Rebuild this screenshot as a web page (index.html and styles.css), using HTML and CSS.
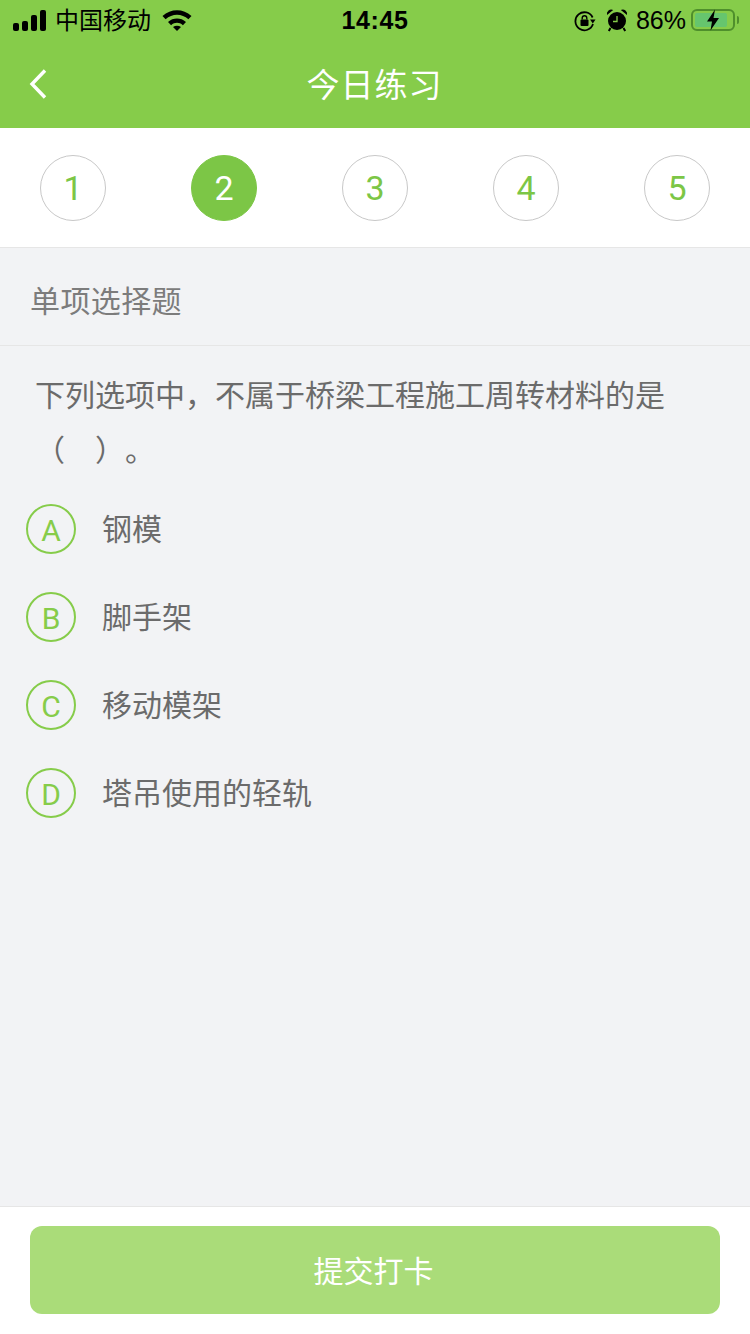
FILE: index.html
```html
<!DOCTYPE html>
<html lang="zh-CN">
<head>
    <meta charset="UTF-8">
    <meta name="viewport" content="width=device-width, initial-scale=1.0">
    <title>今日练习</title>
    <link rel="stylesheet" href="styles.css">
</head>
<body>
    <div class="app">
        <header class="top">
            <div class="status-bar">
                <div class="status-left">
                    <div class="signal">
                        <span class="bar bar-1"></span>
                        <span class="bar bar-2"></span>
                        <span class="bar bar-3"></span>
                        <span class="bar bar-4"></span>
                    </div>
                    <span class="carrier">中国移动</span>
                    <svg class="wifi" width="30" height="22" viewBox="0 0 30 22">
                        <path d="M0.5 7C8.8 -0.8 21.2 -0.8 29.5 7L26.4 10.3C19.8 4.3 10.2 4.3 3.6 10.3Z" fill="#000"/>
                        <path d="M6 13C11.2 8.4 18.8 8.4 24 13L20.9 16.2C17.2 13 12.8 13 9.1 16.2Z" fill="#000"/>
                        <path d="M11 18C13.4 16.2 16.6 16.2 19 18L15 22Z" fill="#000"/>
                    </svg>
                </div>
                <div class="status-time">14:45</div>
                <div class="status-right">
                    <svg class="rotate-lock" width="22" height="22" viewBox="0 0 22 22">
                        <path d="M18.6 7.5A9 9 0 1 0 19 14" fill="none" stroke="#000" stroke-width="1.8"/>
                        <path d="M16 9.5H21.5L18.8 13.5Z" fill="#000"/>
                        <rect x="6.5" y="9.5" width="8" height="6.5" rx="1" fill="#000"/>
                        <path d="M8.2 9.5V8A2.3 2.3 0 0 1 12.8 8V9.5" fill="none" stroke="#000" stroke-width="1.4"/>
                    </svg>
                    <svg class="alarm" width="22" height="24" viewBox="0 0 22 24">
                        <circle cx="11" cy="13" r="9" fill="#000"/>
                        <path d="M1 7A4.4 4.4 0 0 1 7.2 2Z" fill="#000"/>
                        <path d="M21 7A4.4 4.4 0 0 0 14.8 2Z" fill="#000"/>
                        <path d="M4.5 20L2.8 23M17.5 20L19.2 23" stroke="#000" stroke-width="2"/>
                        <path d="M11 8V13.5H7" fill="none" stroke="#86cc4a" stroke-width="1.3"/>
                    </svg>
                    <span class="battery-text">86%</span>
                    <div class="battery">
                        <div class="battery-level"></div>
                        <svg class="bolt" width="14" height="22" viewBox="0 0 14 22">
                            <path d="M9 0.5L1 12.5H6L4.5 21.5L13 9H7.5Z" fill="#000"/>
                        </svg>
                    </div>
                    <span class="battery-cap"></span>
                </div>
            </div>
            <div class="nav">
                <svg class="back" width="20" height="32" viewBox="0 0 20 32">
                    <path d="M17 2.5L4 16L17 29.5" fill="none" stroke="#fff" stroke-width="3.4"/>
                </svg>
                <h1 class="nav-title">今日练习</h1>
            </div>
        </header>

        <div class="steps">
            <div class="step">1</div>
            <div class="step active">2</div>
            <div class="step">3</div>
            <div class="step">4</div>
            <div class="step">5</div>
        </div>

        <main class="content">
            <div class="type-row">单项选择题</div>
            <div class="question">下列选项中，不属于桥梁工程施工周转材料的是（&nbsp;&nbsp;&nbsp;）。</div>
            <div class="options">
                <div class="option"><span class="letter">A</span><span class="option-text">钢模</span></div>
                <div class="option"><span class="letter">B</span><span class="option-text">脚手架</span></div>
                <div class="option"><span class="letter">C</span><span class="option-text">移动模架</span></div>
                <div class="option"><span class="letter">D</span><span class="option-text">塔吊使用的轻轨</span></div>
            </div>
        </main>

        <footer class="bottom">
            <button class="submit">提交打卡</button>
        </footer>
    </div>
</body>
</html>
```

FILE: styles.css
```css
:root {
    --green: #86cc4a;
    --green-dark: #7cc646;
    --green-light: #aadc79;
    --background: #f2f3f5;
    --border: #e6e6e6;
    --text: #6b6b6b;
}

* {
    margin: 0;
    padding: 0;
    box-sizing: border-box;
    font-family: 'Liberation Sans', 'Noto Sans CJK SC', sans-serif;
}

body {
    background-color: var(--background);
}

.app {
    display: flex;
    flex-direction: column;
    height: 1334px;
}

/* Header */
.top {
    height: 128px;
    background-color: var(--green);
}

.status-bar {
    position: relative;
    display: flex;
    justify-content: space-between;
    align-items: center;
    height: 40px;
    padding: 0 11px 0 13px;
    color: #000;
}

.status-left,
.status-right {
    display: flex;
    align-items: center;
}

.signal {
    display: flex;
    align-items: flex-end;
    gap: 3px;
    margin-right: 9px;
}

.bar {
    width: 6px;
    background-color: #000;
    border-radius: 2px;
}

.bar-1 { height: 8px; }
.bar-2 { height: 10px; }
.bar-3 { height: 16px; }
.bar-4 { height: 21px; }

.carrier {
    font-size: 24px;
    line-height: 40px;
    padding-top: 2px;
    margin-right: 11px;
}

.status-time {
    position: absolute;
    left: 0;
    right: 0;
    text-align: center;
    font-size: 25px;
    font-weight: bold;
    letter-spacing: 0.6px;
    line-height: 40px;
    pointer-events: none;
}

.rotate-lock {
    margin: 2px 10px 0 0;
}

.alarm {
    margin-right: 8px;
}

.battery-text {
    font-size: 25px;
    line-height: 40px;
    margin-right: 5px;
}

.battery {
    position: relative;
    width: 44px;
    height: 22px;
    border: 2px solid #4f8f2c;
    border-radius: 6px;
    padding: 2px;
}

.battery-level {
    width: 32px;
    height: 14px;
    background-color: #66c56e;
    border-radius: 2px;
}

.bolt {
    position: absolute;
    left: 13px;
    top: -2px;
}

.battery-cap {
    width: 2px;
    height: 8px;
    margin-left: 2px;
    background-color: #4f8f2c;
    border-radius: 0 2px 2px 0;
}

.nav {
    position: relative;
    height: 88px;
    display: flex;
    align-items: center;
    justify-content: center;
}

.back {
    position: absolute;
    left: 28px;
    top: 28px;
}

.nav-title {
    font-size: 33px;
    font-weight: normal;
    color: #fff;
    letter-spacing: 1px;
    padding: 0 1px 2px 0;
}

/* Step circles */
.steps {
    display: flex;
    justify-content: space-between;
    height: 120px;
    padding: 27px 40px 0;
    background-color: #fff;
    border-bottom: 1px solid var(--border);
}

.step {
    display: flex;
    align-items: center;
    justify-content: center;
    width: 66px;
    height: 66px;
    border: 1px solid #c8c8c8;
    border-radius: 50%;
    font-family: Roboto, sans-serif;
    font-size: 34px;
    color: var(--green-dark);
}

.step.active {
    background-color: var(--green-dark);
    border-color: var(--green-dark);
    color: #fff;
}

/* Question */
.content {
    flex: 1;
}

.type-row {
    height: 98px;
    padding-left: 30px;
    font-size: 30px;
    letter-spacing: 0.4px;
    line-height: 107px;
    color: #7c7c7c;
    border-bottom: 1px solid var(--border);
}

.question {
    padding: 22px 60px 0 35px;
    font-size: 30px;
    line-height: 55px;
    color: var(--text);
    text-spacing-trim: space-all;
    word-spacing: 1.7px;
}

.options {
    display: flex;
    flex-direction: column;
    gap: 38px;
    margin-top: 26px;
    padding-left: 26px;
}

.option {
    display: flex;
    align-items: center;
    height: 50px;
}

.letter {
    display: flex;
    align-items: center;
    justify-content: center;
    width: 50px;
    height: 50px;
    padding-top: 3px;
    border: 2px solid var(--green);
    border-radius: 50%;
    font-family: Roboto, sans-serif;
    font-size: 30px;
    color: var(--green);
    margin-right: 26px;
}

.option-text {
    font-size: 30px;
    padding-bottom: 4px;
    color: var(--text);
}

/* Submit */
.bottom {
    height: 128px;
    padding: 19px 30px 0;
    background-color: #fff;
    border-top: 1px solid var(--border);
}

.submit {
    display: block;
    width: 100%;
    height: 88px;
    border: none;
    border-radius: 12px;
    padding: 0 3px 3px 0;
    background-color: var(--green-light);
    color: #fff;
    font-size: 30px;
}
```
